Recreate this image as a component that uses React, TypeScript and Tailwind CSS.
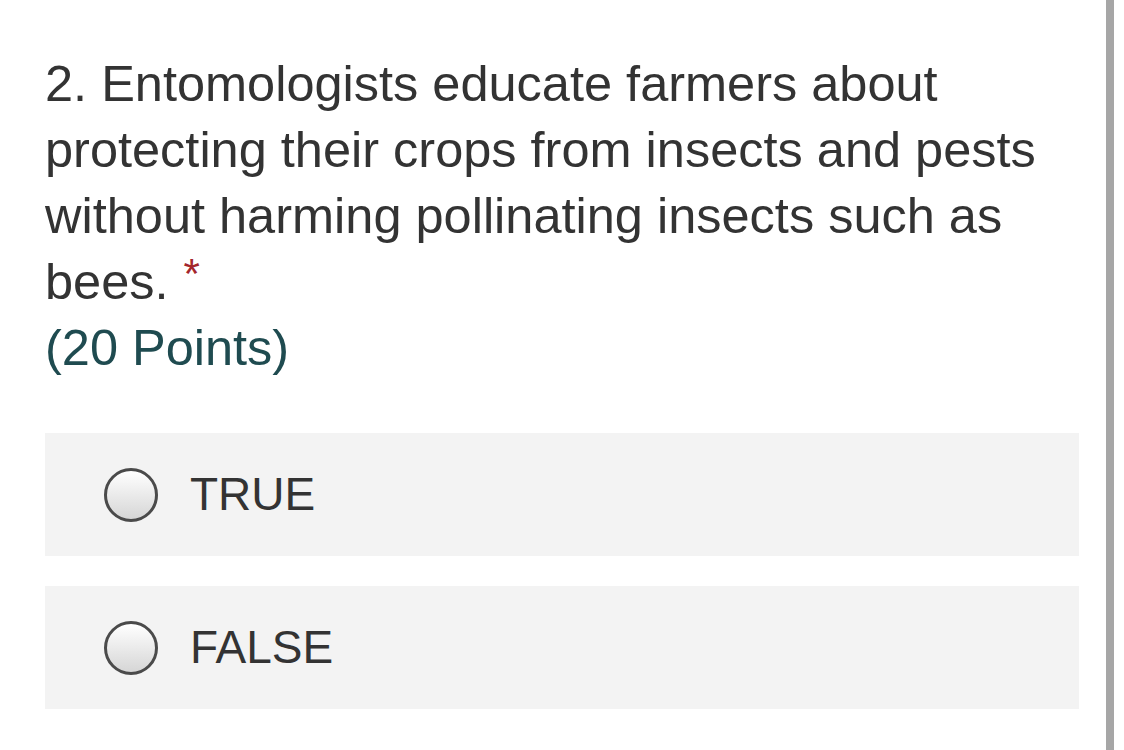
export default function App() {
  const options = ['TRUE', 'FALSE'];
  return (
    <div className="w-[1124px] h-[750px] bg-white flex overflow-hidden" style={{ fontFamily: '"Liberation Sans", Arial, sans-serif' }}>
      <div className="w-[1106px] shrink-0 pl-[45px] pr-[27px] pt-[51px]">
        <div className="text-[50.5px] leading-[66px] text-[#333333]">
          2. Entomologists educate farmers about protecting their crops from insects and pests without harming pollinating insects such as bees.
          <span className="inline-block align-top ml-[15px] mt-[10px] text-[42px] leading-[30px] text-[#a4262c]">*</span>
        </div>
        <div className="text-[50.5px] leading-[66px] text-[#1f4b50]">(20 Points)</div>
        <div className="mt-[52px] flex flex-col gap-[30px]">
          {options.map((o) => (
            <div key={o} className="h-[123px] w-[1034px] bg-[#f3f3f3] flex items-center pl-[59px]">
              <span className="w-[54px] h-[54px] rounded-full border-[3px] border-[#4a4a4a] bg-gradient-to-b from-white to-[#d6d6d6] shrink-0" />
              <span className="ml-[32px] text-[46px] text-[#333333]">{o}</span>
            </div>
          ))}
        </div>
      </div>
      <div className="w-[8px] h-full bg-[#a6a6a6] shrink-0" />
      <div className="flex-1 bg-white" />
    </div>
  );
}
